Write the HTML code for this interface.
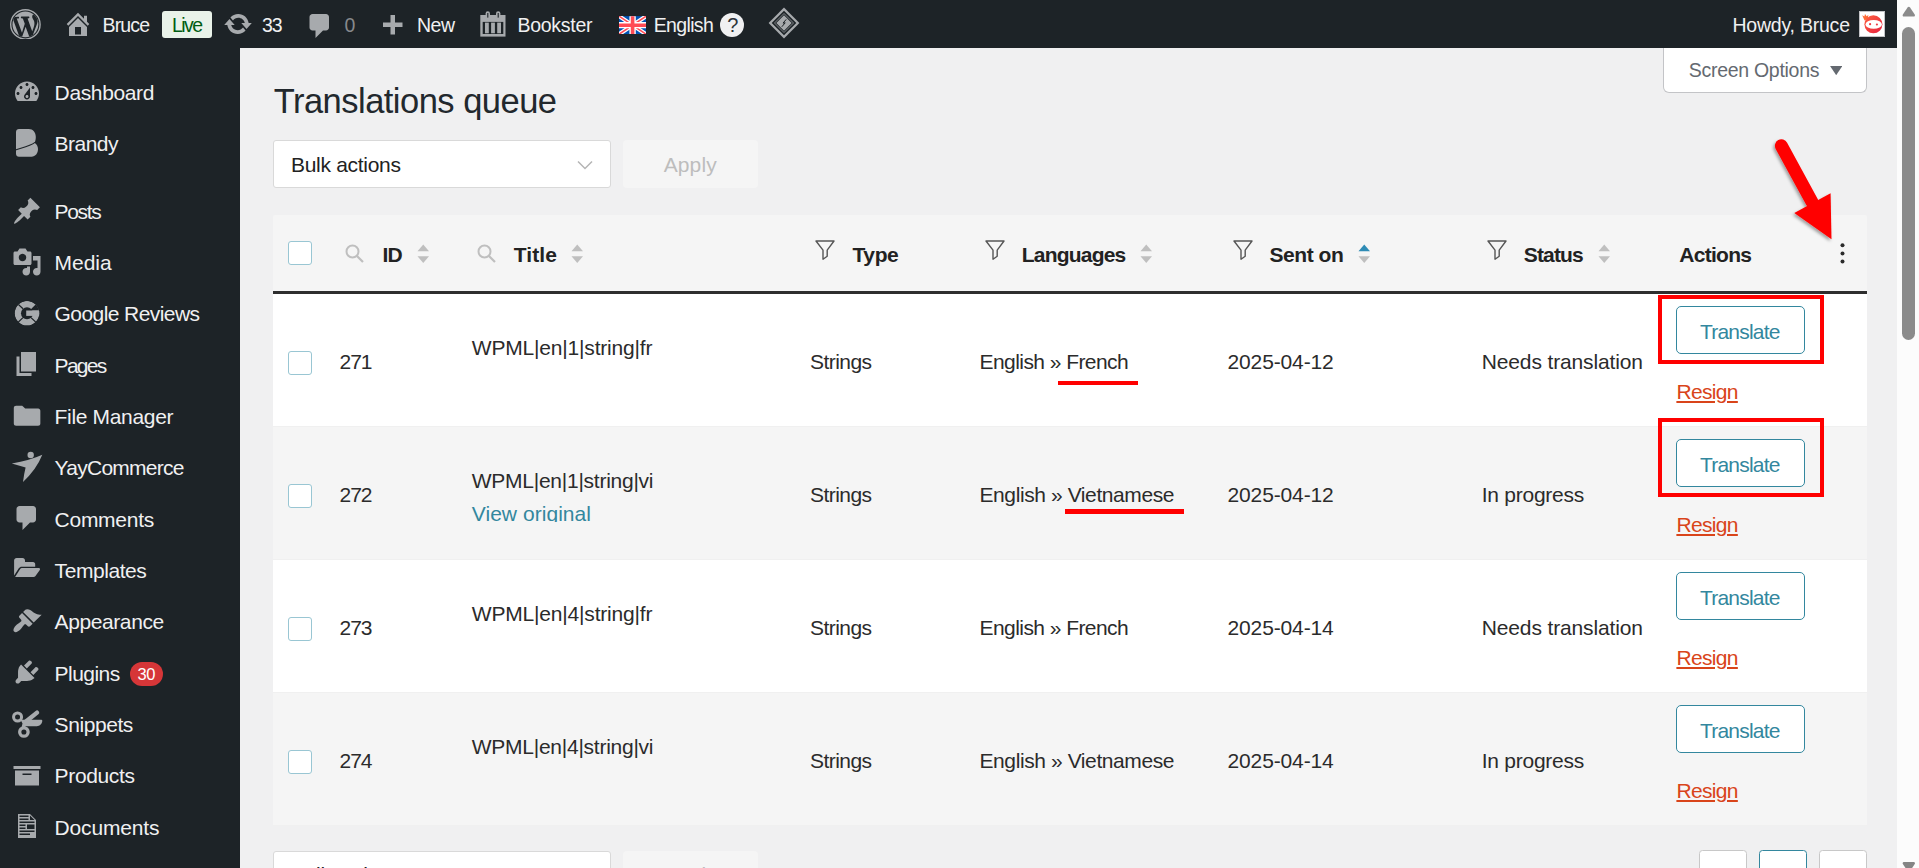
<!DOCTYPE html>
<html lang="en">
<head>
<meta charset="utf-8">
<title>Translations queue</title>
<style>
*{box-sizing:border-box;margin:0;padding:0}
html,body{width:1919px;height:868px;overflow:hidden}
body{background:#f0f0f1;font-family:"Liberation Sans",sans-serif;color:#1d2327;position:relative;font-size:21px}
.abs{position:absolute;white-space:pre}
#bar{position:absolute;left:0;top:0;width:1897px;height:48px;background:#1d2327;color:#f0f0f1}
#side{position:absolute;left:0;top:48px;width:240px;height:820px;background:#1d2327;color:#f0f0f1}
#sb{position:absolute;left:1897px;top:0;width:22px;height:868px;background:#fcfcfc}
#so{position:absolute;left:1663px;top:48px;width:204px;height:45px;background:#fff;border:1.5px solid #c3c4c7;border-top:none;border-radius:0 0 6px 6px}
.sel{position:absolute;left:273px;width:338px;height:47.5px;background:#fff;border:1.5px solid #d9d9d9;border-radius:3px}
.apply{position:absolute;left:623px;width:135px;height:48px;background:#f5f5f5;border-radius:4px}
#th{position:absolute;left:273px;top:215px;width:1594px;height:79px;background:#f5f5f5;border-bottom:3px solid #2e2e2e;border-radius:2px 2px 0 0}
.row{position:absolute;left:273px;width:1594px;height:133px;border-bottom:1px solid #f0f0f0}
.odd{background:#fff}
.even{background:#f5f5f5}
.cb{position:absolute;width:24px;height:24px;background:#fff;border:1.5px solid #99c6d3;border-radius:3px}
.btn{position:absolute;left:1676px;width:129px;height:48px;border:1.5px solid #33879e;border-radius:5px;background:#fff}
.redbox{position:absolute;border:4px solid #ff0000}
.redline{position:absolute;height:4px;background:#ff0000}
a{color:inherit;text-decoration:none}
h1{font-weight:400}
</style>
</head>
<body>

<div id="bar">
<svg class="abs" style="left:10.1px;top:8.7px;" width="30.8" height="30.8" viewBox="0 0 20 20" fill="#a7aaad"><defs><clipPath id="wpc"><circle cx="10" cy="10" r="8.400"/></clipPath></defs><circle cx="10" cy="10" r="9.550" fill="none" stroke="#a7aaad" stroke-width="0.900"/><circle cx="10" cy="10" r="8.400"/><path clip-path="url(#wpc)" fill="#1d2327" d="M20 10c0-5.51-4.49-10-10-10C4.48 0 0 4.49 0 10c0 5.52 4.48 10 10 10 5.51 0 10-4.48 10-10zM7.78 15.37L4.37 6.22c.55-.02 1.17-.08 1.17-.08.5-.06.44-1.13-.06-1.11 0 0-1.45.11-2.37.11-.18 0-.37 0-.58-.01C4.12 2.69 6.87 1.11 10 1.11c2.33 0 4.45.87 6.05 2.34-.68-.11-1.65.39-1.65 1.58 0 .74.45 1.36.9 2.1.35.61.55 1.36.55 2.46 0 1.49-1.4 5-1.4 5l-3.03-8.37c.54-.02.82-.17.82-.17.5-.05.44-1.25-.06-1.22 0 0-1.44.12-2.38.12-.87 0-2.33-.12-2.33-.12-.5-.03-.56 1.2-.06 1.22l.92.08 1.26 3.41zM17.41 10c.24-.64.74-1.87.43-4.25.7 1.29 1.05 2.71 1.05 4.25 0 3.29-1.73 6.24-4.4 7.78.97-2.59 1.94-5.2 2.92-7.78zM6.1 18.09C3.12 16.65 1.11 13.53 1.11 10c0-1.3.23-2.48.72-3.59C3.25 10.3 4.67 14.2 6.1 18.09zm4.03-6.63l2.58 6.98c-.86.29-1.76.45-2.71.45-.79 0-1.57-.11-2.29-.33.81-2.38 1.62-4.74 2.42-7.1z"/></svg>
<svg class="abs" style="left:63px;top:9px;" width="30" height="30" viewBox="0 0 20 20" fill="#a7aaad"><path d="M16 8.5l1.53 1.53-1.06 1.06L10 4.62l-6.47 6.47-1.06-1.06L10 2.5l4 4v-2h2v4zm-6-2.46l6 5.99V18H4v-5.97zM12 17v-5H8v5h4z"/></svg>
<a class="abs" style="left:102.50px;top:12.74px;line-height:25px;font-size:19.5px;letter-spacing:-0.863px;">Bruce</a>
<div class="abs" style="left:162px;top:11px;width:50px;height:27px;background:#e9f2e9;border-radius:3px"></div>
<span class="abs" style="left:172.00px;top:12.74px;line-height:25px;font-size:19.5px;letter-spacing:-1.594px;color:#005c12;">Live</span>
<svg class="abs" style="left:223px;top:9px;" width="30" height="30" viewBox="0 0 20 20" fill="#a7aaad"><path d="M10.2 3.28c3.53 0 6.43 2.61 6.92 6h2.08l-3.5 4-3.5-4h2.32c-.45-1.97-2.21-3.45-4.32-3.45-1.45 0-2.73.71-3.54 1.78L4.95 5.66C6.23 4.2 8.11 3.28 10.2 3.28zm-.4 13.44c-3.52 0-6.43-2.61-6.92-6H.8l3.5-4c1.17 1.33 2.33 2.67 3.5 4H5.48c.45 1.97 2.21 3.45 4.32 3.45 1.45 0 2.73-.71 3.54-1.78l1.71 1.95c-1.28 1.46-3.15 2.38-5.25 2.38z"/></svg>
<span class="abs" style="left:262.00px;top:12.74px;line-height:25px;font-size:19.5px;letter-spacing:-1.203px;">33</span>
<svg class="abs" style="left:304.5px;top:10.9px;" width="30" height="30" viewBox="0 0 20 20" fill="#a7aaad"><path d="M5 2h9c1.1 0 2 .9 2 2v7c0 1.1-.9 2-2 2h-2l-5 5v-5H5c-1.1 0-2-.9-2-2V4c0-1.1.9-2 2-2z"/></svg>
<span class="abs" style="left:344.50px;top:12.74px;line-height:25px;font-size:19.5px;letter-spacing:-0.359px;color:#87898c;">0</span>
<svg class="abs" style="left:377.2px;top:12px;" width="30" height="30" viewBox="0 0 20 20" fill="#a7aaad"><path d="M17 7v3h-5v5H9v-5H4V7h5V2h3v5h5z"/></svg>
<a class="abs" style="left:417.00px;top:12.74px;line-height:25px;font-size:19.5px;letter-spacing:-0.508px;">New</a>
<svg class="abs" style="left:480px;top:10.5px;" width="26" height="26" viewBox="0 0 26 26" fill="#a7aaad"><rect x="0.300" y="4" width="25.200" height="21.600"/><rect x="2.700" y="10.900" width="20.600" height="12.100" fill="#1d2327"/><rect x="5" y="11.600" width="3.800" height="10.700"/><rect x="11.100" y="11.600" width="3.800" height="10.700"/><rect x="17.200" y="11.600" width="3.800" height="10.700"/><rect x="5.600" y="0.300" width="4.400" height="7.500" rx="2.200"/><rect x="16" y="0.300" width="4.400" height="7.500" rx="2.200"/><rect x="7.250" y="2" width="1.100" height="4.600" fill="#1d2327"/><rect x="17.650" y="2" width="1.100" height="4.600" fill="#1d2327"/></svg>
<a class="abs" style="left:517.50px;top:12.74px;line-height:25px;font-size:19.5px;letter-spacing:-0.279px;">Bookster</a>
<svg class="abs" style="left:619px;top:15.8px;" width="27.2" height="18.4" viewBox="0 0 60 40"><rect width="60" height="40" fill="#0052b4"/><path d="M0 0L60 40M60 0L0 40" stroke="#fff" stroke-width="9"/><path d="M0 0L60 40M60 0L0 40" stroke="#ff4b55" stroke-width="3.500"/><path d="M30 0v40M0 20h60" stroke="#fff" stroke-width="14"/><path d="M30 0v40M0 20h60" stroke="#ff4b55" stroke-width="8"/></svg>
<a class="abs" style="left:653.75px;top:12.74px;line-height:25px;font-size:19.5px;letter-spacing:-0.661px;">English</a>
<div class="abs" style="left:719.5px;top:12.500px;width:24.500px;height:24.500px;border-radius:50%;background:#f0f0f1"></div>
<span class="abs" style="left:727.20px;top:12.27px;line-height:26px;font-size:20px;letter-spacing:0.000px;color:#2c3338;">?</span>
<svg class="abs" style="left:768.2px;top:7px;" width="32" height="32" viewBox="-16 -16 32 32"><path d="M0 -15.400L15.400 0L0 15.400L-15.400 0z" fill="#a7aaad"/><path d="M0 -12.300L12.300 0L0 12.300L-12.300 0z" fill="#1d2327"/><path d="M0 -9.500L9.500 0L0 9.500L-9.500 0z" fill="none" stroke="#9a9ea2" stroke-width="0.800"/><path d="M0 -7.700L7.700 0L0 7.700L-7.700 0z" fill="#a7aaad"/><path d="M2.200 -3.600L-1 0.100L1.200 -0.200L-2.200 3.800" fill="none" stroke="#1d2327" stroke-width="1"/></svg>
<a class="abs" style="left:1732.50px;top:12.74px;line-height:25px;font-size:19.5px;letter-spacing:-0.222px;">Howdy, Bruce</a>
<div class="abs" style="left:1859px;top:11px;width:26px;height:26px;background:#fff;border:1px solid #c3c4c7"></div>
<svg class="abs" style="left:1860px;top:12px;" width="24" height="24" viewBox="0 0 24 24"><defs><linearGradient id="nj" x1="0" y1="0" x2="1" y2="1"><stop offset="0" stop-color="#ff6340"/><stop offset="1" stop-color="#e51e3f"/></linearGradient></defs><path d="M2.200 3.200l2.200 1.300l0.600-2.400l1.600 2.200l1.800-1.200l-0.600 3.700l-3.200 1.800z" fill="#ff6a35"/><circle cx="13.400" cy="12.300" r="9" fill="url(#nj)"/><ellipse cx="13.700" cy="12.400" rx="8.200" ry="4.300" fill="#fff"/><circle cx="10.100" cy="12.200" r="1.100" fill="#ef3b45"/><circle cx="16.900" cy="12.500" r="1.100" fill="#ef3b45"/></svg>
</div>
<div id="side"></div>
<nav id="adminmenu" aria-label="Main menu">
<a class="abs" style="left:54.60px;top:79.22px;line-height:27px;font-size:21px;letter-spacing:-0.367px;color:#f0f0f1;">Dashboard</a>
<svg class="abs" style="left:12px;top:76.5px;" width="30" height="30" viewBox="0 0 20 20" fill="#a7aaad"><path d="M3.76 16h12.48c1.1-1.37 1.76-3.11 1.76-5 0-4.42-3.58-8-8-8s-8 3.58-8 8c0 1.89.66 3.63 1.76 5zM10 4c.55 0 1 .45 1 1s-.45 1-1 1-1-.45-1-1 .45-1 1-1zM6 6c.55 0 1 .45 1 1s-.45 1-1 1-1-.45-1-1 .45-1 1-1zm8 0c.55 0 1 .45 1 1s-.45 1-1 1-1-.45-1-1 .45-1 1-1zm-5.37 5.55L12 7v6c0 1.1-.9 2-2 2s-2-.9-2-2c0-.57.24-1.08.63-1.45zM4 10c.55 0 1 .45 1 1s-.45 1-1 1-1-.45-1-1 .45-1 1-1zm12 0c.55 0 1 .45 1 1s-.45 1-1 1-1-.45-1-1 .45-1 1-1zm-5 3c0-.55-.45-1-1-1s-1 .45-1 1 .45 1 1 1 1-.45 1-1z"/></svg>
<a class="abs" style="left:54.60px;top:130.02px;line-height:27px;font-size:21px;letter-spacing:-0.529px;color:#f0f0f1;">Brandy</a>
<a class="abs" style="left:54.60px;top:197.82px;line-height:27px;font-size:21px;letter-spacing:-1.333px;color:#f0f0f1;">Posts</a>
<svg class="abs" style="left:12px;top:196.1px;" width="30" height="30" viewBox="0 0 20 20" fill="#a7aaad"><path d="M10.44 3.02l1.82-1.82 6.36 6.35-1.83 1.82c-1.05-.68-2.48-.57-3.41.36l-.75.75c-.92.93-1.04 2.35-.35 3.41l-1.83 1.82-2.41-2.41-2.8 2.79c-.42.42-3.38 2.71-3.8 2.29s1.86-3.39 2.28-3.81l2.79-2.79L4.1 9.36l1.83-1.82c1.05.69 2.48.57 3.4-.36l.75-.75c.93-.92 1.05-2.35.36-3.41z"/></svg>
<a class="abs" style="left:54.60px;top:249.15px;line-height:27px;font-size:21px;letter-spacing:-0.051px;color:#f0f0f1;">Media</a>
<svg class="abs" style="left:12px;top:247.4px;" width="30" height="30" viewBox="0 0 20 20" fill="#a7aaad"><path d="M13 11V4c0-.55-.45-1-1-1h-1.67L9 1H5L3.67 3H2c-.55 0-1 .45-1 1v7c0 .55.45 1 1 1h10c.55 0 1-.45 1-1zM7 4.5c1.38 0 2.5 1.12 2.5 2.5S8.38 9.5 7 9.5 4.5 8.38 4.5 7 5.62 4.5 7 4.5zM14 6h5v10.5c0 1.38-1.12 2.5-2.5 2.5S14 17.880 14 16.5s1.120-2.500 2.500-2.500c.170 0 .340.020.500.050V9h-3V6zm-4 8.050V13h2v3.500c0 1.380-1.120 2.500-2.500 2.500S7 17.880 7 16.500 8.120 14 9.500 14c.170 0 .340.020.500.050z"/></svg>
<a class="abs" style="left:54.60px;top:300.48px;line-height:27px;font-size:21px;letter-spacing:-0.577px;color:#f0f0f1;">Google Reviews</a>
<a class="abs" style="left:54.60px;top:351.81px;line-height:27px;font-size:21px;letter-spacing:-1.712px;color:#f0f0f1;">Pages</a>
<svg class="abs" style="left:12px;top:349.1px;" width="30" height="30" viewBox="0 0 20 20" fill="#a7aaad"><path d="M6 15V2h10v13H6zm-1 1h8v2H3V5h2v11z"/></svg>
<a class="abs" style="left:54.60px;top:403.14px;line-height:27px;font-size:21px;letter-spacing:-0.333px;color:#f0f0f1;">File Manager</a>
<svg class="abs" style="left:12px;top:400.4px;" width="30" height="30" viewBox="0 0 20 20" fill="#a7aaad"><path d="M1.2 5.4C1.2 4.5 1.9 3.9 2.7 3.9H6.8L8.8 5.7H17.4C18.3 5.7 18.9 6.4 18.9 7.2V15.7C18.9 16.6 18.3 17.2 17.4 17.2H2.7C1.9 17.2 1.2 16.6 1.2 15.7Z"/></svg>
<a class="abs" style="left:54.60px;top:454.47px;line-height:27px;font-size:21px;letter-spacing:-0.751px;color:#f0f0f1;">YayCommerce</a>
<a class="abs" style="left:54.60px;top:505.80px;line-height:27px;font-size:21px;letter-spacing:-0.276px;color:#f0f0f1;">Comments</a>
<svg class="abs" style="left:12px;top:503.1px;" width="30" height="30" viewBox="0 0 20 20" fill="#a7aaad"><path d="M5 2h9c1.1 0 2 .9 2 2v7c0 1.1-.9 2-2 2h-2l-5 5v-5H5c-1.1 0-2-.9-2-2V4c0-1.1.9-2 2-2z"/></svg>
<a class="abs" style="left:54.60px;top:557.13px;line-height:27px;font-size:21px;letter-spacing:-0.440px;color:#f0f0f1;">Templates</a>
<a class="abs" style="left:54.60px;top:608.46px;line-height:27px;font-size:21px;letter-spacing:-0.407px;color:#f0f0f1;">Appearance</a>
<svg class="abs" style="left:12px;top:605.7px;" width="30" height="30" viewBox="0 0 20 20" fill="#a7aaad"><path d="M14.48 11.06L7.41 3.99l1.5-1.5c.5-.56 2.3-.47 3.51.32 1.21.8 1.43 1.28 2.91 2.1 1.18.64 2.45 1.26 4.45.85zm-.71.71L6.7 4.7 4.93 6.47c-.39.39-.39 1.02 0 1.41l1.06 1.06c.39.39.39 1.03 0 1.42-.6.6-1.43 1.11-2.21 1.69-.35.26-.7.53-1.01.84C1.43 14.23.4 16.08 1.4 17.07c.99 1 2.84-.03 4.18-1.36.31-.31.58-.66.85-1.02.57-.78 1.08-1.61 1.69-2.21.39-.39 1.02-.39 1.41 0l1.06 1.06c.39.39 1.02.39 1.41 0z"/></svg>
<a class="abs" style="left:54.60px;top:659.79px;line-height:27px;font-size:21px;letter-spacing:-0.548px;color:#f0f0f1;">Plugins</a>
<svg class="abs" style="left:12px;top:657.1px;" width="30" height="30" viewBox="0 0 20 20" fill="#a7aaad"><path d="M13.11 4.36L9.87 7.6 8 5.73l3.24-3.24c.35-.34 1.05-.2 1.56.32.52.51.66 1.21.31 1.55zm-8 1.77l.91-1.12 9.01 9.01-1.19.84c-.71.71-2.63 1.16-3.82 1.16H6.14L4.9 17.26c-.59.59-1.54.59-2.12 0-.59-.58-.59-1.53 0-2.12l1.24-1.24v-3.88c0-1.13.4-3.19 1.09-3.89zm7.26 3.97l3.24-3.24c.34-.35 1.04-.21 1.55.31.52.51.66 1.21.31 1.55l-3.24 3.25z"/></svg>
<a class="abs" style="left:54.60px;top:711.12px;line-height:27px;font-size:21px;letter-spacing:-0.433px;color:#f0f0f1;">Snippets</a>
<a class="abs" style="left:54.60px;top:762.45px;line-height:27px;font-size:21px;letter-spacing:-0.354px;color:#f0f0f1;">Products</a>
<svg class="abs" style="left:12px;top:759.7px;" width="30" height="30" viewBox="0 0 20 20" fill="#a7aaad"><path d="M19 4v2H1V4h18zM2 7h16v10H2V7zm11 3V9H7v1h6z"/></svg>
<a class="abs" style="left:54.60px;top:813.78px;line-height:27px;font-size:21px;letter-spacing:-0.177px;color:#f0f0f1;">Documents</a>
<svg class="abs" style="left:12px;top:811.1px;" width="30" height="30" viewBox="0 0 20 20" fill="#a7aaad"><path d="M12 2l4 4v12H4V2h8zM5 3v1h6V3H5zm7 3h3l-3-3v3zM5 5v1h6V5H5zm10 3V7H5v1h10zM5 9v1h4V9H5zm10 3V9h-5v3h5zM5 11v1h4v-1H5zm10 3v-1H5v1h10zm-3 2v-1H5v1h7z"/></svg>
<svg class="abs" style="left:12px;top:126px;" width="30" height="34" viewBox="0 0 30 34" fill="#a7aaad"><path d="M7 3H16.800C21 3 23.800 6.500 23.800 11C23.800 13.500 23.300 15.500 22.500 16.750C24.800 18 26 20.500 26 23.100C26 27.500 23.500 30.700 19.500 30.700H7C5.300 30.700 4 29.400 4 27.700V6C4 4.300 5.300 3 7 3Z"/><path d="M3.500 23.900C10 21.700 18 20.200 23 16.400" fill="none" stroke="#1d2327" stroke-width="1.100"/></svg>
<svg class="abs" style="left:12px;top:297.8px;" width="30" height="30" viewBox="0 0 30 30" fill="#a7aaad"><defs><clipPath id="gc"><circle cx="15" cy="15.200" r="12.300"/></clipPath></defs><g clip-path="url(#gc)"><circle cx="15" cy="15.200" r="12.300"/><circle cx="15" cy="15.200" r="6" fill="#1d2327"/><path d="M17.700 12.500H29V1z" fill="#1d2327"/><rect x="14.200" y="12.500" width="14" height="5.400"/><path d="M4 4.200L11 10.800M4 26.200L11 19.600M25 25.200L19 19.600" stroke="#1d2327" stroke-width="1.200"/></g></svg>
<svg class="abs" style="left:10px;top:450px;" width="36" height="36" viewBox="0 0 36 36" fill="#a7aaad"><circle cx="20.700" cy="5" r="3.200"/><path d="M1.800 13.500Q20 10.500 32.300 4.850Q26.500 19.500 13 32Q14 24 15.600 17.600Z"/></svg>
<svg class="abs" style="left:12px;top:555px;" width="30" height="26" viewBox="0 0 30 26" fill="#a7aaad"><path d="M2.100 5.500C2.100 4 3.200 2.950 4.600 2.950H10.500C12 2.950 13 4 13 5.500V7H21C22.300 7 23.200 8 23.200 9.200V11.700H9.800C8.500 11.700 7.500 12.300 6.800 13.300L2.100 20.500Z"/><path d="M9.900 13H26.800C27.900 13 28.400 14 27.800 14.900L23.300 21.200C22.800 21.800 22.300 22 21.600 22H3.100L8 14.200C8.500 13.400 9.100 13 9.900 13Z"/></svg>
<svg class="abs" style="left:10px;top:708px;" width="36" height="36" viewBox="0 0 36 36" fill="#a7aaad"><g fill="none" stroke="#a7aaad"><circle cx="7.560" cy="9" r="4" stroke-width="3"/><circle cx="13.900" cy="24" r="4.200" stroke-width="3.300"/></g><path d="M27 4.600L16 13.500" stroke="#a7aaad" stroke-width="4.400" stroke-linecap="round"/><path d="M10.500 11.800H31.300a1 1 0 0 1 1 1c0 3-2.500 5.400-5.500 5.400H16L13 20.500L11.500 19.500L12.500 15.500z"/></svg>
<div class="abs" style="left:130px;top:661.5px;width:33px;height:24.5px;border-radius:12.5px;background:#d63638"></div>
<span class="abs" style="left:137.50px;top:663.78px;line-height:21px;font-size:16.5px;letter-spacing:-0.359px;color:#fff;">30</span>
</nav>
<div id="sb"><div class="abs" style="left:5px;top:27px;width:13px;height:313px;border-radius:7px;background:#8b8b8b"></div>
<svg class="abs" style="left:3.7px;top:6px;" width="15.6" height="11.5" viewBox="0 0 14 12" fill="#8b8b8b"><path d="M7 0.800c0.500 0 1 0.300 1.300 0.700l4.900 7.300c0.600 0.900 0 2.200-1.200 2.200H2c-1.200 0-1.800-1.300-1.200-2.200l4.900-7.300c0.300-0.400 0.800-0.700 1.300-0.700z"/></svg>
<svg class="abs" style="left:3.7px;top:861px;" width="15.6" height="11.5" viewBox="0 0 14 12" fill="#858585"><path d="M7 11.200c0.500 0 1-0.300 1.300-0.700l4.900-7.300c0.600-0.900 0-2.200-1.200-2.200H2c-1.200 0-1.800 1.300-1.200 2.200l4.900 7.300c0.300 0.400 0.800 0.700 1.300 0.700z"/></svg>
</div>
<main>
<h1 class="abs" style="left:273.70px;top:78.55px;line-height:45px;font-size:34.5px;letter-spacing:-0.521px;color:#22282d;">Translations queue</h1>
<div id="so"></div>
<span class="abs" style="left:1688.75px;top:58.24px;line-height:25px;font-size:19.5px;letter-spacing:-0.281px;color:#646970;">Screen Options</span>
<svg class="abs" style="left:1829.6px;top:66px;" width="12.4" height="9.2" viewBox="0 0 12 9" fill="#646970"><path d="M0 0h12L6 9z"/></svg>
<div class="sel" style="top:140px"></div>
<span class="abs" style="left:291.00px;top:151.22px;line-height:27px;font-size:21px;letter-spacing:-0.294px;color:#222;">Bulk actions</span>
<svg class="abs" style="left:577px;top:160px;" width="16" height="10" viewBox="0 0 16 10"><path d="M1 1.500L8 8.500L15 1.500" fill="none" stroke="#b5b5b5" stroke-width="1.500"/></svg>
<div class="apply" style="top:140px"></div>
<span class="abs" style="left:663.70px;top:151.22px;line-height:27px;font-size:21px;letter-spacing:0.117px;color:#bdbdbd;">Apply</span>
<div id="th"></div>
<div class="cb" style="left:288px;top:241px"></div>
<svg class="abs" style="left:345px;top:244px;" width="19" height="19" viewBox="0 0 19 19"><circle cx="7.500" cy="7.500" r="6" fill="none" stroke="#bfbfbf" stroke-width="2"/><path d="M12 12l6 6" stroke="#bfbfbf" stroke-width="2.200"/></svg>
<span class="abs" style="left:382.40px;top:241.22px;line-height:27px;font-size:21px;letter-spacing:-0.800px;font-weight:700;color:#222;">ID</span>
<svg class="abs" style="left:417px;top:243.5px;" width="12.5" height="19.5" viewBox="0 0 12.500 19.500"><path d="M6.250 0.500L12 7.300H0.500z" fill="#bfbfbf"/><path d="M6.250 19L12 12.200H0.500z" fill="#bfbfbf"/></svg>
<svg class="abs" style="left:477px;top:244px;" width="19" height="19" viewBox="0 0 19 19"><circle cx="7.500" cy="7.500" r="6" fill="none" stroke="#bfbfbf" stroke-width="2"/><path d="M12 12l6 6" stroke="#bfbfbf" stroke-width="2.200"/></svg>
<span class="abs" style="left:513.75px;top:241.22px;line-height:27px;font-size:21px;letter-spacing:0.113px;font-weight:700;color:#222;">Title</span>
<svg class="abs" style="left:571px;top:243.5px;" width="12.5" height="19.5" viewBox="0 0 12.500 19.500"><path d="M6.250 0.500L12 7.300H0.500z" fill="#bfbfbf"/><path d="M6.250 19L12 12.200H0.500z" fill="#bfbfbf"/></svg>
<svg class="abs" style="left:814.5px;top:240.2px;" width="20" height="20" viewBox="0 0 20 20"><path d="M1 1H19L12.200 10.200V16.200L8 19.200V10.200Z" fill="none" stroke="#555" stroke-width="1.400" stroke-linejoin="round"/></svg>
<span class="abs" style="left:852.50px;top:241.22px;line-height:27px;font-size:21px;letter-spacing:-0.406px;font-weight:700;color:#222;">Type</span>
<svg class="abs" style="left:984.5px;top:240.2px;" width="20" height="20" viewBox="0 0 20 20"><path d="M1 1H19L12.200 10.200V16.200L8 19.200V10.200Z" fill="none" stroke="#555" stroke-width="1.400" stroke-linejoin="round"/></svg>
<span class="abs" style="left:1021.75px;top:241.22px;line-height:27px;font-size:21px;letter-spacing:-0.795px;font-weight:700;color:#222;">Languages</span>
<svg class="abs" style="left:1139.5px;top:243.5px;" width="12.5" height="19.5" viewBox="0 0 12.500 19.500"><path d="M6.250 0.500L12 7.300H0.500z" fill="#bfbfbf"/><path d="M6.250 19L12 12.200H0.500z" fill="#bfbfbf"/></svg>
<svg class="abs" style="left:1232.5px;top:240.2px;" width="20" height="20" viewBox="0 0 20 20"><path d="M1 1H19L12.200 10.200V16.200L8 19.200V10.200Z" fill="none" stroke="#555" stroke-width="1.400" stroke-linejoin="round"/></svg>
<span class="abs" style="left:1269.50px;top:241.22px;line-height:27px;font-size:21px;letter-spacing:-0.458px;font-weight:700;color:#222;">Sent on</span>
<svg class="abs" style="left:1357.5px;top:243.5px;" width="12.5" height="19.5" viewBox="0 0 12.500 19.500"><path d="M6.250 0.500L12 7.300H0.500z" fill="#2e8bb5"/><path d="M6.250 19L12 12.200H0.500z" fill="#bfbfbf"/></svg>
<svg class="abs" style="left:1487.0px;top:240.2px;" width="20" height="20" viewBox="0 0 20 20"><path d="M1 1H19L12.200 10.200V16.200L8 19.200V10.200Z" fill="none" stroke="#555" stroke-width="1.400" stroke-linejoin="round"/></svg>
<span class="abs" style="left:1523.75px;top:241.22px;line-height:27px;font-size:21px;letter-spacing:-0.838px;font-weight:700;color:#222;">Status</span>
<svg class="abs" style="left:1598px;top:243.5px;" width="12.5" height="19.5" viewBox="0 0 12.500 19.500"><path d="M6.250 0.500L12 7.300H0.500z" fill="#bfbfbf"/><path d="M6.250 19L12 12.200H0.500z" fill="#bfbfbf"/></svg>
<span class="abs" style="left:1679.25px;top:241.22px;line-height:27px;font-size:21px;letter-spacing:-0.711px;font-weight:700;color:#222;">Actions</span>
<svg class="abs" style="left:1838.8px;top:242.7px;" width="7" height="21" viewBox="0 0 7 21" fill="#2b2b2b"><circle cx="3.500" cy="2.200" r="2"/><circle cx="3.500" cy="10.400" r="2"/><circle cx="3.500" cy="18.600" r="2"/></svg>
<div class="row odd" style="top:294px"></div>
<div class="cb" style="left:288px;top:350.5px"></div>
<span class="abs" style="left:339.50px;top:347.97px;line-height:27px;font-size:21px;letter-spacing:-1.023px;color:#2b2b2b;">271</span>
<span class="abs" style="left:471.75px;top:334.22px;line-height:27px;font-size:21px;letter-spacing:-0.183px;color:#2b2b2b;">WPML|en|1|string|fr</span>
<span class="abs" style="left:810.00px;top:347.97px;line-height:27px;font-size:21px;letter-spacing:-0.560px;color:#2b2b2b;">Strings</span>
<span class="abs" style="left:979.50px;top:347.97px;line-height:27px;font-size:21px;letter-spacing:-0.556px;color:#2b2b2b;">English » French</span>
<span class="abs" style="left:1227.50px;top:347.97px;line-height:27px;font-size:21px;letter-spacing:-0.130px;color:#2b2b2b;">2025-04-12</span>
<span class="abs" style="left:1481.75px;top:347.97px;line-height:27px;font-size:21px;letter-spacing:-0.137px;color:#2b2b2b;">Needs translation</span>
<div class="btn" style="top:306px"></div>
<a class="abs" style="left:1700.00px;top:317.97px;line-height:27px;font-size:21px;letter-spacing:-0.783px;color:#33879e;">Translate</a>
<a class="abs" style="left:1676.40px;top:378.22px;line-height:27px;font-size:21px;letter-spacing:-0.655px;color:#d9441a;text-decoration:underline;text-decoration-thickness:2px;text-underline-offset:1.500px">Resign</a>
<div class="row even" style="top:427px"></div>
<div class="cb" style="left:288px;top:483.5px"></div>
<span class="abs" style="left:339.50px;top:480.97px;line-height:27px;font-size:21px;letter-spacing:-1.023px;color:#2b2b2b;">272</span>
<span class="abs" style="left:471.75px;top:467.22px;line-height:27px;font-size:21px;letter-spacing:-0.257px;color:#2b2b2b;">WPML|en|1|string|vi</span>
<div class="abs" style="left:470px;top:497px;width:200px;height:25px;overflow:hidden"><a class="abs" style="left:1.75px;top:3.22px;line-height:27px;font-size:21px;letter-spacing:0.047px;color:#33879e;">View original</a></div>
<span class="abs" style="left:810.00px;top:480.97px;line-height:27px;font-size:21px;letter-spacing:-0.560px;color:#2b2b2b;">Strings</span>
<span class="abs" style="left:979.50px;top:480.97px;line-height:27px;font-size:21px;letter-spacing:-0.408px;color:#2b2b2b;">English » Vietnamese</span>
<span class="abs" style="left:1227.50px;top:480.97px;line-height:27px;font-size:21px;letter-spacing:-0.130px;color:#2b2b2b;">2025-04-12</span>
<span class="abs" style="left:1481.75px;top:480.97px;line-height:27px;font-size:21px;letter-spacing:-0.251px;color:#2b2b2b;">In progress</span>
<div class="btn" style="top:439px"></div>
<a class="abs" style="left:1700.00px;top:450.97px;line-height:27px;font-size:21px;letter-spacing:-0.783px;color:#33879e;">Translate</a>
<a class="abs" style="left:1676.40px;top:511.22px;line-height:27px;font-size:21px;letter-spacing:-0.655px;color:#d9441a;text-decoration:underline;text-decoration-thickness:2px;text-underline-offset:1.500px">Resign</a>
<div class="row odd" style="top:560px"></div>
<div class="cb" style="left:288px;top:616.5px"></div>
<span class="abs" style="left:339.50px;top:613.97px;line-height:27px;font-size:21px;letter-spacing:-1.023px;color:#2b2b2b;">273</span>
<span class="abs" style="left:471.75px;top:600.22px;line-height:27px;font-size:21px;letter-spacing:-0.183px;color:#2b2b2b;">WPML|en|4|string|fr</span>
<span class="abs" style="left:810.00px;top:613.97px;line-height:27px;font-size:21px;letter-spacing:-0.560px;color:#2b2b2b;">Strings</span>
<span class="abs" style="left:979.50px;top:613.97px;line-height:27px;font-size:21px;letter-spacing:-0.556px;color:#2b2b2b;">English » French</span>
<span class="abs" style="left:1227.50px;top:613.97px;line-height:27px;font-size:21px;letter-spacing:-0.130px;color:#2b2b2b;">2025-04-14</span>
<span class="abs" style="left:1481.75px;top:613.97px;line-height:27px;font-size:21px;letter-spacing:-0.137px;color:#2b2b2b;">Needs translation</span>
<div class="btn" style="top:572px"></div>
<a class="abs" style="left:1700.00px;top:583.97px;line-height:27px;font-size:21px;letter-spacing:-0.783px;color:#33879e;">Translate</a>
<a class="abs" style="left:1676.40px;top:644.22px;line-height:27px;font-size:21px;letter-spacing:-0.655px;color:#d9441a;text-decoration:underline;text-decoration-thickness:2px;text-underline-offset:1.500px">Resign</a>
<div class="row even" style="top:693px"></div>
<div class="cb" style="left:288px;top:749.5px"></div>
<span class="abs" style="left:339.50px;top:746.97px;line-height:27px;font-size:21px;letter-spacing:-1.023px;color:#2b2b2b;">274</span>
<span class="abs" style="left:471.75px;top:733.22px;line-height:27px;font-size:21px;letter-spacing:-0.257px;color:#2b2b2b;">WPML|en|4|string|vi</span>
<span class="abs" style="left:810.00px;top:746.97px;line-height:27px;font-size:21px;letter-spacing:-0.560px;color:#2b2b2b;">Strings</span>
<span class="abs" style="left:979.50px;top:746.97px;line-height:27px;font-size:21px;letter-spacing:-0.408px;color:#2b2b2b;">English » Vietnamese</span>
<span class="abs" style="left:1227.50px;top:746.97px;line-height:27px;font-size:21px;letter-spacing:-0.130px;color:#2b2b2b;">2025-04-14</span>
<span class="abs" style="left:1481.75px;top:746.97px;line-height:27px;font-size:21px;letter-spacing:-0.251px;color:#2b2b2b;">In progress</span>
<div class="btn" style="top:705px"></div>
<a class="abs" style="left:1700.00px;top:716.97px;line-height:27px;font-size:21px;letter-spacing:-0.783px;color:#33879e;">Translate</a>
<a class="abs" style="left:1676.40px;top:777.22px;line-height:27px;font-size:21px;letter-spacing:-0.655px;color:#d9441a;text-decoration:underline;text-decoration-thickness:2px;text-underline-offset:1.500px">Resign</a>
<div class="redbox" style="left:1658px;top:295px;width:166px;height:69px"></div>
<div class="redbox" style="left:1658px;top:418px;width:166px;height:79px"></div>
<div class="redline" style="left:1058px;top:381px;width:80px"></div>
<div class="redline" style="left:1065px;top:509px;width:119px;height:5px"></div>
<svg class="abs" style="left:1760px;top:130px;" width="90" height="120" viewBox="0 0 90 120"><g filter="url(#sh)"><path d="M21.400 15.800L52 72" stroke="#ff0000" stroke-width="13" stroke-linecap="round"/><path d="M71.500 109.300L34.300 83L70.600 63.300z" fill="#ff0000"/></g><defs><filter id="sh" x="-20%" y="-20%" width="150%" height="150%"><feDropShadow dx="-1.500" dy="2" stdDeviation="1.500" flood-color="#000" flood-opacity="0.350"/></filter></defs></svg>
<div class="sel" style="top:851px"></div>
<span class="abs" style="left:291.00px;top:861.22px;line-height:27px;font-size:21px;letter-spacing:-0.294px;color:#222;">Bulk actions</span>
<svg class="abs" style="left:577px;top:871px;" width="16" height="10" viewBox="0 0 16 10"><path d="M1 1.500L8 8.500L15 1.500" fill="none" stroke="#b5b5b5" stroke-width="1.500"/></svg>
<div class="apply" style="top:851px"></div>
<span class="abs" style="left:663.70px;top:861.22px;line-height:27px;font-size:21px;letter-spacing:0.117px;color:#bdbdbd;">Apply</span>
<div class="abs" style="left:1699px;top:850px;width:48px;height:48px;background:#fff;border:1.500px solid #c8c8c8;border-radius:3.500px"></div>
<div class="abs" style="left:1759px;top:850px;width:48px;height:48px;background:#fff;border:1.500px solid #33879e;border-radius:3.500px"></div>
<div class="abs" style="left:1819px;top:850px;width:48px;height:48px;background:#fff;border:1.500px solid #c8c8c8;border-radius:3.500px"></div>
<span class="abs" style="left:1721.00px;top:860.18px;line-height:31px;font-size:24px;letter-spacing:0.000px;color:#bdbdbd;">‹</span>
<span class="abs" style="left:1778.00px;top:861.22px;line-height:27px;font-size:21px;letter-spacing:0.000px;color:#33879e;">1</span>
<span class="abs" style="left:1836.00px;top:860.18px;line-height:31px;font-size:24px;letter-spacing:0.000px;color:#bdbdbd;">›</span>
</main>
</body>
</html>
